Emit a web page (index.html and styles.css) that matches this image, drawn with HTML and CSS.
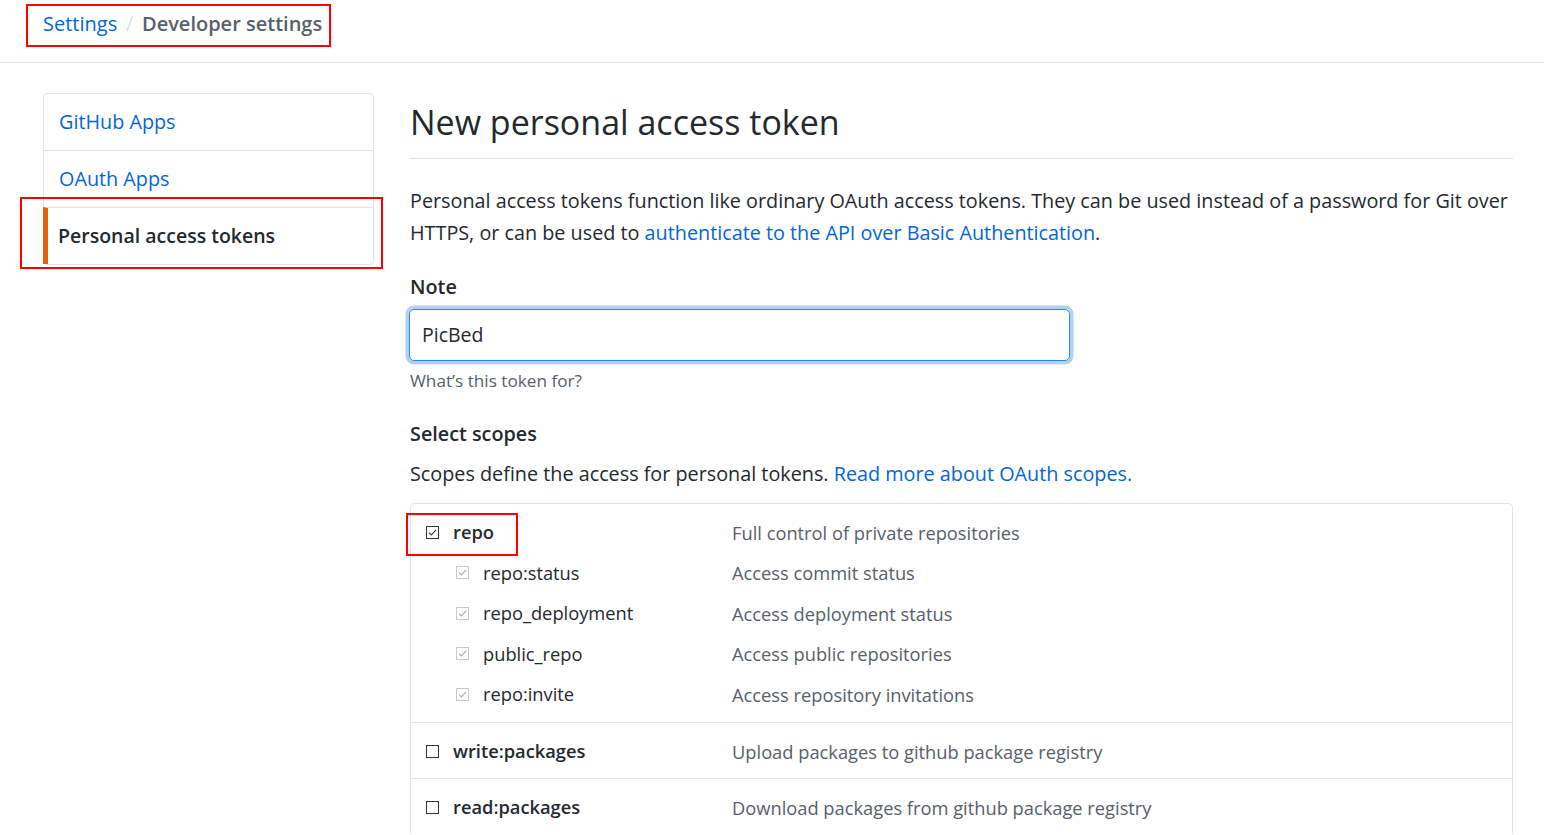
FILE: index.html
```html
<!DOCTYPE html>
<html lang="en">
<head>
<meta charset="utf-8">
<title>New personal access token</title>
<link rel="stylesheet" href="styles.css">
</head>
<body>
<header class="topbar">
  <nav class="crumbs">
    <a href="#" class="crumb-link">Settings</a>
    <span class="crumb-sep">/</span>
    <span class="crumb-current">Developer settings</span>
  </nav>
</header>

<div class="layout">
  <aside class="sidebar">
    <a href="#" class="side-item">GitHub Apps</a>
    <a href="#" class="side-item">OAuth Apps</a>
    <a href="#" class="side-item selected">Personal access tokens<span class="mark mark-side"></span></a>
  </aside>

  <main class="content">
    <h1 class="title">New personal access token</h1>
    <p class="lead">Personal access tokens function like ordinary OAuth access tokens. They can be used instead of a password for Git over HTTPS, or can be used to <a href="#">authenticate to the API over Basic Authentication</a>.</p>

    <label class="label">Note</label>
    <div class="input">PicBed</div>
    <p class="hint">What’s this token for?</p>

    <h3 class="label scopes-title">Select scopes</h3>
    <p class="scopes-text">Scopes define the access for personal tokens. <a href="#">Read more about OAuth scopes.</a></p>

    <div class="scopes">
      <div class="group">
        <div class="row">
          <div class="name main"><span class="cb on"><svg viewBox="0 0 13 13" width="13" height="13"><rect x="0.5" y="0.5" width="12" height="12" fill="#fff" stroke="#333"/><path d="M3 6.6 L5.4 9 L10 3.8" fill="none" stroke="#333" stroke-width="1.1"/></svg></span><b>repo</b><span class="mark mark-repo"></span></div>
          <div class="desc">Full control of private repositories</div>
        </div>
        <div class="row">
          <div class="name sub"><span class="cb dis"><svg viewBox="0 0 13 13" width="13" height="13"><rect x="0.5" y="0.5" width="12" height="12" fill="#fff" stroke="#c8c8c8"/><path d="M3 6.6 L5.4 9 L10 3.8" fill="none" stroke="#a8a8a8" stroke-width="1.1"/></svg></span>repo:status</div>
          <div class="desc">Access commit status</div>
        </div>
        <div class="row">
          <div class="name sub"><span class="cb dis"><svg viewBox="0 0 13 13" width="13" height="13"><rect x="0.5" y="0.5" width="12" height="12" fill="#fff" stroke="#c8c8c8"/><path d="M3 6.6 L5.4 9 L10 3.8" fill="none" stroke="#a8a8a8" stroke-width="1.1"/></svg></span>repo_deployment</div>
          <div class="desc">Access deployment status</div>
        </div>
        <div class="row">
          <div class="name sub"><span class="cb dis"><svg viewBox="0 0 13 13" width="13" height="13"><rect x="0.5" y="0.5" width="12" height="12" fill="#fff" stroke="#c8c8c8"/><path d="M3 6.6 L5.4 9 L10 3.8" fill="none" stroke="#a8a8a8" stroke-width="1.1"/></svg></span>public_repo</div>
          <div class="desc">Access public repositories</div>
        </div>
        <div class="row">
          <div class="name sub"><span class="cb dis"><svg viewBox="0 0 13 13" width="13" height="13"><rect x="0.5" y="0.5" width="12" height="12" fill="#fff" stroke="#c8c8c8"/><path d="M3 6.6 L5.4 9 L10 3.8" fill="none" stroke="#a8a8a8" stroke-width="1.1"/></svg></span>repo:invite</div>
          <div class="desc">Access repository invitations</div>
        </div>
      </div>
      <div class="group">
        <div class="row">
          <div class="name main"><span class="cb"><svg viewBox="0 0 13 13" width="13" height="13"><rect x="0.5" y="0.5" width="12" height="12" fill="#fff" stroke="#333"/></svg></span><b>write:packages</b></div>
          <div class="desc">Upload packages to github package registry</div>
        </div>
      </div>
      <div class="group">
        <div class="row">
          <div class="name main"><span class="cb"><svg viewBox="0 0 13 13" width="13" height="13"><rect x="0.5" y="0.5" width="12" height="12" fill="#fff" stroke="#333"/></svg></span><b>read:packages</b></div>
          <div class="desc">Download packages from github package registry</div>
        </div>
      </div>
    </div>
  </main>
</div>
</body>
</html>
```

FILE: styles.css
```css
* { box-sizing: border-box; }
html, body { margin: 0; padding: 0; background: #fff; }
body {
  font-family: "Open Sans", "Noto Sans", "Liberation Sans", sans-serif;
  font-size: 19.8px;
  line-height: 1.5;
  color: #24292e;
  overflow: hidden;
}
a { color: #0366d6; text-decoration: none; }

.topbar {
  height: 63px;
  border-bottom: 1px solid #e1e4e8;
  padding: 4px 0 0 26px;
}
.crumbs {
  display: inline-flex;
  align-items: center;
  height: 43px;
  width: 305px;
  border: 2px solid #f00;
  padding: 0 0 4px 15px;
  font-size: 20px;
  white-space: nowrap;
}
.crumb-sep { color: #d1d5da; margin: 0 9px; font-weight: 300; }
.crumb-current { color: #586069; font-weight: 600; }

.layout {
  display: flex;
  align-items: flex-start;
  gap: 36px;
  padding: 30px 0 0 43px;
}
.sidebar {
  width: 331px;
  flex: none;
  border: 1px solid #e1e4e8;
  border-radius: 4px;
  display: flex;
  flex-direction: column;
}
.side-item {
  position: relative;
  display: block;
  padding: 12px 15px 12px 15px;
  line-height: 32px;
  border-top: 1px solid #e1e4e8;
}
.side-item:first-child { border-top: 0; }
.side-item.selected {
  color: #24292e;
  font-weight: 600;
  font-size: 19.5px;
  border-left: 5px solid #e36209;
  padding-left: 10px;
  margin-left: -1px;
}
.mark {
  position: absolute;
  border: 2px solid #f00;
  pointer-events: none;
}
.mark-side { left: -28px; top: -11px; width: 363px; height: 72px; }

.content {
  width: 1103px;
  flex: none;
}
.title {
  margin: 0;
  padding: 7px 0 13px;
  font-size: 34px;
  line-height: 45px;
  font-weight: 400;
  border-bottom: 1px solid #e1e4e8;
}
.lead {
  margin: 26px 0 0;
  line-height: 31.5px;
}
.label {
  display: block;
  margin: 23px 0 0;
  font-size: 19.8px;
  font-weight: 600;
  line-height: 31px;
}
.input {
  margin-top: 7px;
  margin-left: -1px;
  width: 661px;
  height: 52px;
  border: 1px solid #2188ff;
  border-radius: 5px;
  box-shadow: 0 0 0 3.5px rgba(3, 102, 214, 0.3);
  padding: 0 12px;
  display: flex;
  align-items: center;
  font-size: 19.5px;
}
.hint {
  margin: 6px 0 0;
  font-size: 17.2px;
  line-height: 27px;
  color: #586069;
}
.scopes-title { margin-top: 24px; }
.scopes-text { margin: 9px 0 0; line-height: 31px; }

.scopes {
  margin-top: 14px;
  border: 1px solid #e1e4e8;
  border-bottom: 0;
  border-radius: 5px 5px 0 0;
  font-size: 18.3px;
}
.group {
  padding: 8px 0 6.5px;
  border-top: 1px solid #e1e4e8;
}
.group:first-child { border-top: 0; padding-bottom: 7.5px; }
.row {
  display: grid;
  grid-template-columns: 321px 1fr;
  height: 40.5px;
  align-items: center;
}
.name {
  position: relative;
  display: flex;
  align-items: center;
  white-space: nowrap;
  color: #24292e;
  line-height: 28px;
}
.name.main { padding-left: 15px; }
.name.sub { padding-left: 45px; }
.name b { font-weight: 600; }
.cb { display: inline-flex; width: 13px; height: 13px; margin-right: 14px; }
.cb svg { display: block; }
.desc { color: #586069; }
.mark-repo { left: -5px; top: -5px; width: 112px; height: 43px; }
```
